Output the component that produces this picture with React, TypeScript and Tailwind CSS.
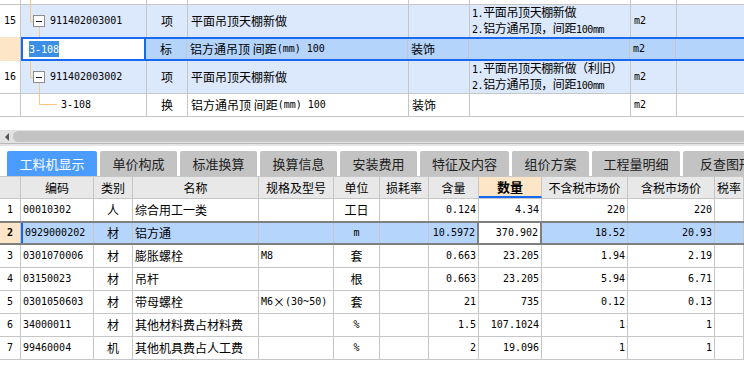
import type { ReactNode } from "react";

function M({ children }: { children: ReactNode }) {
  return (
    <span className="font-['DejaVu_Sans_Mono',monospace] text-[10px]">
      {children}
    </span>
  );
}

function Minus() {
  return (
    <span className="w-[12px] h-[12px] border border-[#8c8c8c] bg-white flex items-center justify-center shrink-0 z-10">
      <span className="w-[6px] h-px bg-[#222]" />
    </span>
  );
}

function TopCell({
  w,
  className,
  clip = true,
  children,
}: {
  w: string;
  className?: string;
  clip?: boolean;
  children?: ReactNode;
}) {
  return (
    <div
      className={`${w} shrink-0 h-full border-r border-[#c6c6c6] flex items-center whitespace-nowrap ${
        clip ? "overflow-hidden" : ""
      } ${className ?? ""}`}
    >
      {children}
    </div>
  );
}

function Desc({ first }: { first: string }) {
  return (
    <div className="flex flex-col leading-[14px] pl-[2px] tracking-[-0.4px]">
      <span>
        <M>1.</M>{first}
      </span>
      <span>
        <M>2.</M>铝方通吊顶，间距<M>100mm</M>
      </span>
    </div>
  );
}

function TopTable() {
  return (
    <div className="flex flex-col text-[12px] text-black">
      {/* previous row tail */}
      <div className="flex h-[5px] border-b border-[#c6c6c6]">
        <TopCell w="w-[21px]" />
        <TopCell w="w-[126px]" className="relative">
          <span className="absolute left-[9px] top-0 h-full w-px bg-[#fcc67a]" />
        </TopCell>
        <TopCell w="w-[41px]" />
        <TopCell w="w-[221px]" />
        <TopCell w="w-[61px]" />
        <TopCell w="w-[161px]" />
        <TopCell w="w-[46px]" />
        <div className="flex-1" />
      </div>

      {/* 15 */}
      <div className="flex h-[32px]">
        <TopCell w="w-[21px]" className="justify-center bg-white">
          <M>15</M>
        </TopCell>
        <div className="flex flex-1 h-full bg-[#dce8fb]">
          <TopCell w="w-[126px]" className="relative pl-[12px] gap-[5px]">
            <span className="absolute left-[9px] top-0 h-[16px] w-px bg-[#fcc67a]" />
            <span className="absolute left-[9px] top-[16px] w-[4px] h-px bg-[#fcc67a]" />
            <span className="absolute left-[18px] top-[21px] bottom-0 w-px bg-[#fcc67a]" />
            <Minus />
            <M>911402003001</M>
          </TopCell>
          <TopCell w="w-[41px]" className="justify-center">
            项
          </TopCell>
          <TopCell w="w-[221px]" className="pl-[3px]">
            平面吊顶天棚新做
          </TopCell>
          <TopCell w="w-[61px]" />
          <TopCell w="w-[161px]" clip={false}>
            <Desc first="平面吊顶天棚新做" />
          </TopCell>
          <TopCell w="w-[46px]" className="pl-[3px]">
            <M>m2</M>
          </TopCell>
          <div className="flex-1" />
        </div>
      </div>

      {/* selected 3-108 */}
      <div className="flex h-[24px]">
        <div className="w-[21px] shrink-0 h-full bg-[#fde6c8] border-r border-[#c6c6c6]" />
        <div className="flex flex-1 h-full border-y-2 border-[#1769f2] bg-[#b4d4fc]">
          <div className="w-[125px] shrink-0 h-full border-x-2 border-[#1769f2] bg-white flex items-center pl-[6px]">
            <span className="bg-[#3a8ee6] text-white leading-[14px]">
              <M>3-108</M>
            </span>
          </div>
          <TopCell w="w-[41px]" className="justify-center">
            标
          </TopCell>
          <TopCell w="w-[221px]" className="pl-[3px]">
            铝方通吊顶 间距<M>(mm) 100</M>
          </TopCell>
          <TopCell w="w-[61px]" className="pl-[3px]">
            装饰
          </TopCell>
          <TopCell w="w-[161px]" />
          <TopCell w="w-[46px]" className="pl-[3px]">
            <M>m2</M>
          </TopCell>
          <div className="flex-1" />
        </div>
      </div>

      {/* 16 */}
      <div className="flex h-[33px] border-b border-[#c6c6c6]">
        <TopCell w="w-[21px]" className="justify-center bg-white">
          <M>16</M>
        </TopCell>
        <div className="flex flex-1 h-full bg-[#dce8fb]">
          <TopCell w="w-[126px]" className="relative pl-[12px] gap-[5px]">
            <span className="absolute left-[9px] top-0 h-[16px] w-px bg-[#fcc67a]" />
            <span className="absolute left-[9px] top-[16px] w-[4px] h-px bg-[#fcc67a]" />
            <span className="absolute left-[18px] top-[21px] bottom-0 w-px bg-[#fcc67a]" />
            <Minus />
            <M>911402003002</M>
          </TopCell>
          <TopCell w="w-[41px]" className="justify-center">
            项
          </TopCell>
          <TopCell w="w-[221px]" className="pl-[3px]">
            平面吊顶天棚新做
          </TopCell>
          <TopCell w="w-[61px]" />
          <TopCell w="w-[161px]" clip={false}>
            <Desc first="平面吊顶天棚新做（利旧）" />
          </TopCell>
          <TopCell w="w-[46px]" className="pl-[3px]">
            <M>m2</M>
          </TopCell>
          <div className="flex-1" />
        </div>
      </div>

      {/* child */}
      <div className="flex h-[23px] border-b border-[#c6c6c6]">
        <TopCell w="w-[21px]" />
        <TopCell w="w-[126px]" className="relative pl-[40px]">
          <span className="absolute left-[18px] top-0 h-[11px] w-px bg-[#fcc67a]" />
          <span className="absolute left-[18px] top-[10px] w-[18px] h-px bg-[#fcc67a]" />
          <M>3-108</M>
        </TopCell>
        <TopCell w="w-[41px]" className="justify-center">
          换
        </TopCell>
        <TopCell w="w-[221px]" className="pl-[3px]">
          铝方通吊顶 间距<M>(mm) 100</M>
        </TopCell>
        <TopCell w="w-[61px]" className="pl-[3px]">
          装饰
        </TopCell>
        <TopCell w="w-[161px]" />
        <TopCell w="w-[46px]" className="pl-[3px]">
          <M>m2</M>
        </TopCell>
        <div className="flex-1" />
      </div>
    </div>
  );
}

const TABS = [
  { label: "工料机显示", w: "w-[90px]" },
  { label: "单价构成", w: "w-[77px]" },
  { label: "标准换算", w: "w-[77px]" },
  { label: "换算信息", w: "w-[77px]" },
  { label: "安装费用", w: "w-[77px]" },
  { label: "特征及内容", w: "w-[89px]" },
  { label: "组价方案", w: "w-[77px]" },
  { label: "工程量明细", w: "w-[88px]" },
  { label: "反查图形工程量", w: "w-[100px]" },
];

function TabBar() {
  return (
    <div className="flex flex-col">
      <div className="h-[13px] flex items-center bg-[#e2e2e2]">
        <div className="w-[13px] h-full flex items-center justify-center">
          <span className="w-0 h-0 border-y-[4px] border-y-transparent border-r-[4px] border-r-[#555]" />
        </div>
        <div className="flex-1 h-[11px] bg-[#c3c3c3] rounded-l-[6px]" />
      </div>
      <div className="h-px bg-[#b8b8b8]" />
      <div className="h-[2px] bg-[#e4e4e4]" />
      <div className="h-[30px] flex items-end gap-[3px] pl-[7px] bg-white overflow-hidden whitespace-nowrap">
        {TABS.map((t, i) => (
          <div
            key={t.label}
            className={`${t.w} shrink-0 h-[25px] rounded-t-[2px] flex items-center justify-center text-[13px] ${
              i === 0 ? "bg-[#4a9cff] text-white" : "bg-[#c3c3c3] text-[#222]"
            } ${i === TABS.length - 1 ? "justify-start pl-[17px]" : ""}`}
          >
            {t.label}
          </div>
        ))}
      </div>
    </div>
  );
}

const COLS = [
  "w-[21px]",
  "w-[73px]",
  "w-[39px]",
  "w-[126px]",
  "w-[75px]",
  "w-[46px]",
  "w-[49px]",
  "w-[50px]",
  "w-[63px]",
  "w-[86px]",
  "w-[87px]",
  "w-[29px]",
];

const HEAD = [
  "",
  "编码",
  "类别",
  "名称",
  "规格及型号",
  "单位",
  "损耗率",
  "含量",
  "数量",
  "不含税市场价",
  "含税市场价",
  "税率",
];

type Row = {
  code: string;
  kind: string;
  name: string;
  spec: ReactNode;
  unit: ReactNode;
  qty: string;
  amount: string;
  price: string;
  taxPrice: string;
};

const ROWS: Row[] = [
  { code: "00010302", kind: "人", name: "综合用工一类", spec: "", unit: "工日", qty: "0.124", amount: "4.34", price: "220", taxPrice: "220" },
  { code: "0929000202", kind: "材", name: "铝方通", spec: "", unit: <M>m</M>, qty: "10.5972", amount: "370.902", price: "18.52", taxPrice: "20.93" },
  { code: "0301070006", kind: "材", name: "膨胀螺栓", spec: <M>M8</M>, unit: "套", qty: "0.663", amount: "23.205", price: "1.94", taxPrice: "2.19" },
  { code: "03150023", kind: "材", name: "吊杆", spec: "", unit: "根", qty: "0.663", amount: "23.205", price: "5.94", taxPrice: "6.71" },
  { code: "0301050603", kind: "材", name: "带母螺栓", spec: <><M>M6</M>×<M>(30~50)</M></>, unit: "套", qty: "21", amount: "735", price: "0.12", taxPrice: "0.13" },
  { code: "34000011", kind: "材", name: "其他材料费占材料费", spec: "", unit: <M>%</M>, qty: "1.5", amount: "107.1024", price: "1", taxPrice: "1" },
  { code: "99460004", kind: "机", name: "其他机具费占人工费", spec: "", unit: <M>%</M>, qty: "2", amount: "19.096", price: "1", taxPrice: "1" },
];

function BCell({
  w,
  className,
  children,
}: {
  w: string;
  className?: string;
  children?: ReactNode;
}) {
  return (
    <div
      className={`${w} shrink-0 h-full border-r border-[#c6c6c6] flex items-center overflow-hidden whitespace-nowrap ${
        className ?? ""
      }`}
    >
      {children}
    </div>
  );
}

function BottomTable() {
  return (
    <div className="flex flex-col text-[12px] text-black">
      <div className="flex h-[23px] border-y border-[#c6c6c6] bg-[#e8e8e8]">
        {HEAD.map((h, i) =>
          i === 8 ? (
            <BCell
              key={i}
              w={COLS[i]}
              className="justify-center bg-[#fde6c8] font-bold text-[13px] border-b-2 border-b-[#1769f2]"
            >
              {h}
            </BCell>
          ) : (
            <BCell key={i} w={COLS[i]} className="justify-center">
              {h}
            </BCell>
          )
        )}
      </div>
      {ROWS.map((r, i) => {
        const sel = i === 1;
        return (
          <div
            key={r.code}
            className={`flex h-[23px] ${
              sel
                ? "border-t border-b-2 border-[#7f7f7f] bg-[#b5d5fd]"
                : i === 0
                ? "border-b border-[#7f7f7f]"
                : "border-b border-[#c6c6c6]"
            }`}
          >
            <BCell
              w={COLS[0]}
              className={`justify-center ${
                sel ? "bg-[#fde6c8] font-bold" : "bg-white"
              }`}
            >
              <M>{i + 1}</M>
            </BCell>
            <BCell
              w={COLS[1]}
              className={`pl-[2px] ${sel ? "border-l-2 border-l-[#1769f2]" : ""}`}
            >
              <M>{r.code}</M>
            </BCell>
            <BCell w={COLS[2]} className="justify-center">
              {r.kind}
            </BCell>
            <BCell w={COLS[3]} className="pl-[2px]">
              {r.name}
            </BCell>
            <BCell w={COLS[4]} className="pl-[2px]">
              {r.spec}
            </BCell>
            <BCell w={COLS[5]} className="justify-center">
              {r.unit}
            </BCell>
            <BCell w={COLS[6]} />
            <BCell
              w={COLS[7]}
              className={`justify-end pr-[2px] ${
                sel ? "border-r-2 border-r-[#7f7f7f]" : ""
              }`}
            >
              <M>{r.qty}</M>
            </BCell>
            <BCell
              w={COLS[8]}
              className={`justify-end pr-[2px] ${
                sel ? "bg-white border-r-2 border-r-[#7f7f7f]" : ""
              }`}
            >
              <M>{r.amount}</M>
            </BCell>
            <BCell w={COLS[9]} className="justify-end pr-[2px]">
              <M>{r.price}</M>
            </BCell>
            <BCell w={COLS[10]} className="justify-end pr-[2px]">
              <M>{r.taxPrice}</M>
            </BCell>
            <BCell w={COLS[11]} />
          </div>
        );
      })}
    </div>
  );
}

export default function App() {
  return (
    <div className="w-[744px] h-[376px] overflow-hidden bg-white font-['Noto_Sans_CJK_SC',sans-serif] leading-none">
      <TopTable />
      <div className="h-[13px]" />
      <TabBar />
      <BottomTable />
    </div>
  );
}
